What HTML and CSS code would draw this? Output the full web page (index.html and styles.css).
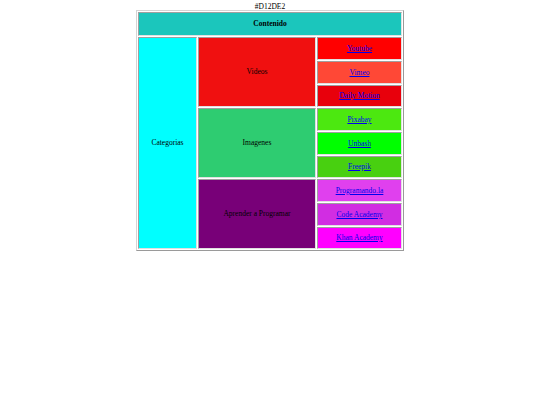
FILE: index.html
```html
<!DOCTYPE html>
<html lang="es">
<head>
<meta charset="utf-8">
<title>Contenido</title>
<link rel="stylesheet" href="styles.css">
</head>
<body>
<div class="title">#D12DE2</div>
<table class="grid">
  <colgroup>
    <col class="c1">
    <col class="c2">
    <col class="c3">
  </colgroup>
  <tr><th colspan="3" class="head">Contenido</th></tr>
  <tr class="r1">
    <td rowspan="9" class="cat">Categorias</td>
    <td rowspan="3" class="videos">Videos</td>
    <td class="yt"><a href="#">Youtube</a></td>
  </tr>
  <tr class="r2"><td class="vimeo"><a href="#">Vimeo</a></td></tr>
  <tr class="r3"><td class="daily"><a href="#">Daily Motion</a></td></tr>
  <tr class="r1">
    <td rowspan="3" class="imgs">Imagenes</td>
    <td class="pixabay"><a href="#">Pixabay</a></td>
  </tr>
  <tr class="r2"><td class="unbash"><a href="#">Unbash</a></td></tr>
  <tr class="r3"><td class="freepik"><a href="#">Freepik</a></td></tr>
  <tr class="r1">
    <td rowspan="3" class="prog">Aprender a Programar</td>
    <td class="pla"><a href="#">Programando.la</a></td>
  </tr>
  <tr class="r2"><td class="code"><a href="#">Code Academy</a></td></tr>
  <tr class="r3"><td class="khan"><a href="#">Khan Academy</a></td></tr>
</table>
</body>
</html>
```
FILE: styles.css
```css
html, body {
  margin: 0;
  padding: 0;
  background: #ffffff;
}
body {
  padding-top: 3px;
  font-family: "Liberation Serif", "Times New Roman", serif;
  font-size: 7.5px;
  color: #000000;
}
.title {
  text-align: center;
  line-height: 7px;
  height: 7px;
}
.grid {
  margin: 0 auto;
  width: 268px;
  border: 1px solid;
  border-color: #d4d4d4 #9a9a9a #9a9a9a #d4d4d4;
  border-spacing: 1px;
  table-layout: fixed;
}
.c1 { width: 59px; }
.c2 { width: 118px; }
.c3 { width: 85px; }
.grid th, .grid td {
  padding: 0;
  text-align: center;
  vertical-align: middle;
  border: 1px solid;
  border-color: #a0a0a0 #e0e0e0 #e0e0e0 #a0a0a0;
  line-height: 10px;
}
.r1 td, .r2 td { height: 21px; }
.r3 td { height: 20px; }
.grid a {
  color: #0000ee;
  text-decoration: underline;
}
.grid .head {
  height: 22px;
  font-weight: bold;
  background: #1bc6bc;
}
.cat { background: #00ffff; }
.videos { background: #f01010; }
.imgs { background: #2ecc71; }
.prog { background: #780078; }
.yt { background: #ff0000; }
.vimeo { background: #ff4836; }
.daily { background: #e8000c; }
.pixabay { background: #4ce810; }
.unbash { background: #00ff00; }
.freepik { background: #48d010; }
.pla { background: #e040ee; }
.code { background: #d12de2; }
.khan { background: #ff00ff; }
```
